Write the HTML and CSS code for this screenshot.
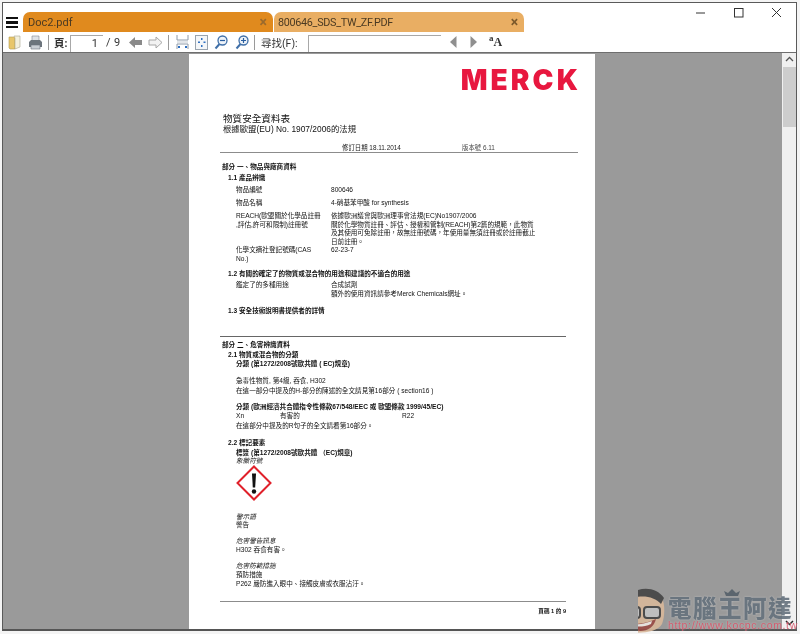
FILE: index.html
```html
<!DOCTYPE html>
<html lang="zh-Hant">
<head>
    <meta charset="UTF-8">
    <meta name="viewport" content="width=device-width, initial-scale=1.0">
    <title>800646_SDS_TW_ZF.PDF</title>
    <link rel="stylesheet" href="styles.css">
</head>
<body>
    <div class="window">
        <div class="tabbar">
            <div class="menu"><span></span><span></span><span></span></div>
            <div class="tab tab-active"><span>Doc2.pdf</span><b class="tab-x">×</b></div>
            <div class="tab tab-other"><span>800646_SDS_TW_ZF.PDF</span><b class="tab-x">×</b></div>
            <div class="controls">
                <svg class="ctl" width="38" height="10" viewBox="0 0 38 10"><path d="M0 5h9" stroke="#333" fill="none"/></svg>
                <svg class="ctl" width="38" height="10" viewBox="0 0 38 10"><rect x=".5" y=".5" width="8.5" height="8.5" stroke="#333" fill="none"/></svg>
                <svg class="ctl" width="24" height="10" viewBox="0 0 24 10"><path d="M0 0l9 9M9 0l-9 9" stroke="#333" fill="none"/></svg>
            </div>
        </div>

        <div class="toolbar">
            <svg class="tb-book" width="13" height="15" viewBox="0 0 13 15"><path d="M1 2h5l1 1v11H2l-1-1z" fill="#e8c66a" stroke="#b49a50" stroke-width=".6"/><path d="M6 1h6v11l-5 2V3z" fill="#f3f0dc" stroke="#a9a58f" stroke-width=".6"/></svg>
            <svg class="tb-print" width="15" height="15" viewBox="0 0 15 15"><path d="M4 1h7v5H4z" fill="#dfe3e8" stroke="#7f8790" stroke-width=".6"/><path d="M1 7l2-2h9l2 2v5H1z" fill="#6c747c"/><path d="M3 10h9v4H3z" fill="#c9ced4" stroke="#6c747c" stroke-width=".6"/></svg>
            <i class="sep tb-sep1"></i>
            <span class="tb-label tb-page">頁:</span>
            <div class="field field-page">1</div>
            <span class="tb-count">/ 9</span>
            <svg class="tb-back" width="15" height="13" viewBox="0 0 15 13"><path d="M1 6.500L7 1v3h7v5H7v3z" fill="#8a8a8a"/></svg>
            <svg class="tb-next" width="15" height="13" viewBox="0 0 15 13"><path d="M14 6.500L8 1v3H1v5h7v3z" fill="#f2f2f2" stroke="#a8a8a8"/></svg>
            <i class="sep tb-sep2"></i>
            <svg class="tb-fitw" width="13" height="16" viewBox="0 0 13 16"><path d="M1 1v5h11V1M1 15v-5h11v5" fill="none" stroke="#8e9aa8"/><path d="M1 8h11" stroke="#c5ccd4"/><path d="M2 12h2v2H2zM9 12h2v2H9z" fill="#2f6fc0"/></svg>
            <svg class="tb-fitp" width="13" height="15" viewBox="0 0 13 15"><rect x=".5" y=".5" width="12" height="14" fill="#f4f6f8" stroke="#9aa4ae"/><path d="M6 3h1.500v2H6zM6 10h1.500v2H6zM3 6.500h2V8H3zM8.500 6.500h2V8h-2z" fill="#2f6fc0"/></svg>
            <svg class="tb-zoomo" width="14" height="15" viewBox="0 0 14 15"><circle cx="8.500" cy="5.500" r="4.500" fill="#eef3f9" stroke="#3f6fa8" stroke-width="1.300"/><path d="M5.500 9L1.500 13.500" stroke="#3f6fa8" stroke-width="2"/><path d="M6 5.500h5" stroke="#2a5fa0" stroke-width="1.200"/></svg>
            <svg class="tb-zoomi" width="14" height="15" viewBox="0 0 14 15"><circle cx="8.500" cy="5.500" r="4.500" fill="#eef3f9" stroke="#3f6fa8" stroke-width="1.300"/><path d="M5.500 9L1.500 13.500" stroke="#3f6fa8" stroke-width="2"/><path d="M6 5.500h5M8.500 3v5" stroke="#2a5fa0" stroke-width="1.200"/></svg>
            <i class="sep tb-sep3"></i>
            <span class="tb-label tb-find">尋找(F):</span>
            <div class="field field-find"></div>
            <svg class="tb-prev" width="7" height="12" viewBox="0 0 7 12"><path d="M6.500 0v12L0 6z" fill="#8f8f8f"/></svg>
            <svg class="tb-fwd" width="7" height="12" viewBox="0 0 7 12"><path d="M.5 0v12L7 6z" fill="#8f8f8f"/></svg>
            <span class="tb-aa"><sup>a</sup>A</span>
        </div>

        <div class="main">
            <div class="viewer">
                <div class="page">
                    <div class="logo">MERCK</div>
                    <div class="doc-title">物質安全資料表</div>
                    <div class="doc-sub">根據歐盟(EU) No. 1907/2006的法規</div>
                    <div class="rev"><span class="rev-date">修訂日期 18.11.2014</span><span>版本號 6.11</span></div>
                    <hr class="rule rule-long rule-top">

                    <div class="ln b sec g-first">部分 一、物品與廠商資料</div>
                    <div class="ln b sub g3">1.1 產品辨識</div>
                    <div class="row g4"><div>物品編號</div><div>800646</div></div>
                    <div class="row g4"><div>物品名稱</div><div>4-硝基苯甲酸 for synthesis</div></div>
                    <div class="row g5">
                        <div>REACH(歐盟關於化學品註冊<br>,評估,許可和限制)註冊號</div>
                        <div>依據歐洲議會與歐洲理事會法規(EC)No1907/2006<br>關於化學物質註冊、評估、授權和管制(REACH)第2篇的規範，此物質<br>及其使用可免除註冊，故無註冊號碼，年使用量無須註冊或於註冊截止<br>日前註冊。</div>
                    </div>
                    <div class="row g0"><div>化學文摘社登記號碼(CAS<br>No.)</div><div>62-23-7</div></div>
                    <div class="ln b sub g7">1.2 有關的確定了的物質或混合物的用途和建議的不適合的用途</div>
                    <div class="row g3"><div>鑑定了的多種用途</div><div>合成試劑<br>額外的使用資訊請參考Merck Chemicals網址。</div></div>
                    <div class="ln b sub g9">1.3 安全技術說明書提供者的詳情</div>

                    <hr class="rule rule-short rule-mid">
                    <div class="ln b sec g-rule">部分 二、危害辨識資料</div>
                    <div class="ln b sub g2">2.1 物質或混合物的分類</div>
                    <div class="ln b item g1">分類 (第1272/2008號歐共體 ( EC)規章)</div>
                    <div class="ln item g9">急毒性物質, 第4級, 吞食, H302</div>
                    <div class="ln item g2">在這一部分中提及的H-部分的陳述的全文請見第16部分 ( section16 )</div>
                    <div class="ln b item g8">分類 (歐洲經濟共合體指令性條款67/548/EEC 或 歐盟條款 1999/45/EC)</div>
                    <div class="ln item risk g1"><span class="risk-a">Xn</span><span class="risk-b">有害的</span><span>R22</span></div>
                    <div class="ln item g2">在這部分中提及的R句子的全文請看第16部分。</div>
                    <div class="ln b sub g9">2.2 標記要素</div>
                    <div class="ln b item g2">標簽 (第1272/2008號歐共體 （EC)規章)</div>
                    <div class="ln i item g0">象徵符號</div>
                    <svg class="ghs" width="36" height="36" viewBox="0 0 36 36">
                        <path d="M18 1.500L34.500 18 18 34.500 1.500 18z" fill="#fff" stroke="#e0202a" stroke-width="2"/>
                        <path d="M16 8.500h4l-.8 14h-2.400z" fill="#111"/>
                        <circle cx="18" cy="26.500" r="2.200" fill="#111"/>
                    </svg>
                    <div class="ln i item g-ghs">警示語</div>
                    <div class="ln item g0">警告</div>
                    <div class="ln i item g8">危害警告訊息</div>
                    <div class="ln item g1">H302 吞食有害。</div>
                    <div class="ln i item g8">危害防範措施</div>
                    <div class="ln item g1">預防措施</div>
                    <div class="ln item g1">P262 嚴防進入眼中、接觸皮膚或衣服沾汙。</div>
                    <hr class="rule rule-short rule-foot">
                    <div class="ln b foot">頁碼 1 的 9</div>
                </div>
            </div>
            <div class="scrollbar">
                <svg width="9" height="6" viewBox="0 0 9 6"><path d="M1 5l3.500-3.500L8 5" fill="none" stroke="#555" stroke-width="1.300"/></svg>
                <div class="thumb"></div>
                <svg class="scroll-down" width="9" height="6" viewBox="0 0 9 6"><path d="M1 1l3.500 3.500L8 1" fill="none" stroke="#222" stroke-width="1.500"/></svg>
            </div>
        </div>
    </div>

    <div class="watermark">
        <svg class="wm-face" width="30" height="48" viewBox="0 0 30 48">
            <path d="M-10 12C0 2 18 2 24 12c3 6 3 18 0 26-5 8-20 10-34 8z" fill="#d9b89a"/>
            <path d="M-10 10C0 0 18 0 26 12l-3 6C16 10 2 8-10 14z" fill="#444"/>
            <rect x="6" y="21" width="16" height="11" rx="3" fill="#c4c4c4" stroke="#444" stroke-width="2"/>
            <rect x="-10" y="21" width="12" height="11" rx="3" fill="#c4c4c4" stroke="#444" stroke-width="2"/>
            <path d="M-8 37c8 2 18 0 26-4-2 8-8 12-16 12-4 0-8-2-10-4z" fill="#9a4a44"/>
            <path d="M-6 38c6 1 12 0 20-3l-1 3c-6 3-13 3-19 2z" fill="#eee8e4"/>
        </svg>
        <div class="wm-text">
            <svg class="wm-crown" width="20" height="12" viewBox="0 0 20 12"><path d="M2 6l4 2 4-4 4 4 4-2-2 5H4z" fill="#55606a"/></svg>
            <div class="wm-name">電腦王阿達</div>
            <div class="wm-url">http://www.kocpc.com.tw</div>
        </div>
    </div>
</body>
</html>
```

FILE: styles.css
```css
html, body {
    margin: 0;
    height: 100%;
    background: #f4f4f4;
    overflow: hidden;
}

body {
    position: relative;
    font-family: Roboto, "Noto Sans CJK TC", sans-serif;
}

.window {
    margin: 2px 3px 0 2px;
    height: 629px;
    border: 1px solid #5a5a5a;
    border-bottom: 2px solid #555;
    box-sizing: border-box;
    background: #fff;
    display: flex;
    flex-direction: column;
    filter: blur(0.3px);
}

/* tabs */
.tabbar {
    height: 29px;
    display: flex;
    align-items: flex-end;
    flex-shrink: 0;
}

.menu {
    width: 12px;
    margin: 0 5px 4px 3px;
    display: flex;
    flex-direction: column;
    gap: 2px;
}

.menu span {
    height: 2.5px;
    background: #111;
}

.tab {
    width: 250px;
    height: 20px;
    margin-right: 1px;
    padding: 0 5px;
    box-sizing: border-box;
    border-radius: 7px 7px 0 0;
    display: flex;
    align-items: center;
    justify-content: space-between;
    font-size: 11px;
    color: #4b3a22;
}

.tab-active {
    background: #e08a1e;
}

.tab-other {
    background: #e9ae63;
    padding-left: 4px;
    font-size: 10.8px;
    letter-spacing: -0.3px;
}

.tab-x {
    font-size: 14px;
    font-weight: 700;
    line-height: 1;
    margin-right: 1px;
    color: #7c5a2c;
}

.tab-active .tab-x {
    color: #9a6a2c;
}

.controls {
    margin-left: auto;
    align-self: flex-start;
    margin-top: 5px;
    display: flex;
}

.ctl {
    display: block;
}

/* toolbar */
.toolbar {
    height: 20px;
    flex-shrink: 0;
    display: flex;
    align-items: center;
    font-size: 10.5px;
    color: #333;
    border-bottom: 1px solid #6e6e6e;
    box-sizing: content-box;
}

.tb-book { margin-left: 5px; }
.tb-print { margin-left: 7px; }
.sep {
    width: 1px;
    height: 15px;
    background: #9a9a9a;
}
.tb-sep1 { margin-left: 5px; }
.tb-page { margin-left: 5px; width: 16px; font-weight: 700; white-space: nowrap; }
.field {
    height: 17px;
    box-sizing: border-box;
    border-top: 1px solid #a8a8a8;
    border-left: 1px solid #a8a8a8;
    background: #fff;
    align-self: flex-end;
}
.field-page {
    width: 33px;
    text-align: right;
    padding-right: 5px;
    font-size: 11px;
    line-height: 16px;
}
.tb-count { margin-left: 3px; width: 15px; font-size: 11px; letter-spacing: 0.4px; white-space: nowrap; }
.tb-back { margin-left: 7px; }
.tb-next { margin-left: 5px; }
.tb-sep2 { margin-left: 5px; }
.tb-fitw { margin-left: 7px; }
.tb-fitp { margin-left: 6px; }
.tb-zoomo { margin-left: 6px; }
.tb-zoomi { margin-left: 7px; }
.tb-sep3 { margin-left: 5px; }
.tb-find { margin-left: 6px; width: 47px; white-space: nowrap; }
.field-find { width: 133px; }
.tb-prev { margin-left: 9px; }
.tb-fwd { margin-left: 13px; }
.tb-aa {
    margin-left: 12px;
    font-family: "Liberation Serif", serif;
    font-weight: 700;
    font-size: 12px;
    line-height: 1;
    color: #333;
}
.tb-aa sup {
    font-size: 9px;
    line-height: 0;
}

/* document area */
.main {
    flex: 1;
    min-height: 0;
    display: flex;
}

.viewer {
    flex: 1;
    background: #9a9a9a;
    padding-left: 186px;
    padding-top: 1px;
    overflow: hidden;
}

.page {
    width: 406px;
    height: 578px;
    box-sizing: border-box;
    background: #fff;
    padding: 16px 17px 0 31px;
    font-family: "Liberation Sans", "Noto Sans CJK TC", sans-serif;
    font-size: 6.6px;
    line-height: 8.5px;
    color: #111;
}

.logo {
    height: 20px;
    margin-right: -3px;
    font-family: Inter, "Liberation Sans", sans-serif;
    font-size: 28px;
    font-weight: 900;
    line-height: 20px;
    letter-spacing: 3.1px;
    text-align: right;
    color: #e8173f;
}

.doc-title {
    margin: 23px 0 0 3px;
    font-size: 9.6px;
    line-height: 11px;
    color: #111;
}

.doc-sub {
    margin: 0 0 0 3px;
    font-size: 8.4px;
    line-height: 11px;
    color: #111;
}

.rev {
    margin-top: 9px;
    padding-left: 122px;
    line-height: 8px;
    font-size: 6.4px;
    color: #444;
}

.rev-date {
    display: inline-block;
    width: 120px;
    color: #222;
}

.rule {
    margin: 0;
    border: 0;
    height: 1px;
    background: #8c8c8c;
}

.rule-top { margin-top: 0; }
.rule-mid { margin-top: 21px; background: #666; }
.rule-foot { margin-top: 13px; }
.rule-long { width: 358px; }
.rule-short { width: 346px; }

.ln {
    line-height: 8px;
    white-space: nowrap;
}

.b { font-weight: 700; color: #111; }
.i { font-style: italic; }
.sec { padding-left: 2px; }
.sub { padding-left: 8px; }
.item { padding-left: 16px; }

.row {
    display: grid;
    grid-template-columns: 95px 1fr;
    padding-left: 16px;
    line-height: 8.5px;
    white-space: nowrap;
}

.g-first { margin-top: 10px; }
.g-rule { margin-top: 4px; }
.g-ghs { margin-top: 12px; }
.g0 { margin-top: 0; }
.g1 { margin-top: 1px; }
.g2 { margin-top: 2px; }
.g3 { margin-top: 3px; }
.g4 { margin-top: 4px; }
.g5 { margin-top: 5px; }
.g7 { margin-top: 7px; }
.g8 { margin-top: 8px; }
.g9 { margin-top: 9px; }

.risk-a { display: inline-block; width: 44px; }
.risk-b { display: inline-block; width: 122px; }

.ghs {
    display: block;
    margin: 0 0 0 16px;
}

.foot {
    width: 346px;
    margin-top: 5px;
    text-align: right;
    font-size: 5.6px;
}

/* scrollbar */
.scrollbar {
    width: 14px;
    background: #f0f0f0;
    display: flex;
    flex-direction: column;
    align-items: center;
    padding-top: 3px;
    box-sizing: border-box;
}

.thumb {
    width: 13px;
    height: 60px;
    margin-top: 5px;
    background: #cdcdcd;
}

.scroll-down {
    margin-top: auto;
    margin-bottom: 3px;
}

/* site watermark over the corner */
.watermark {
    position: absolute;
    left: 638px;
    top: 585px;
    display: flex;
    opacity: 0.9;
}

.wm-face {
    display: block;
    margin-top: 1px;
}

.wm-text {
    position: relative;
    width: 128px;
    padding-top: 11px;
}

.wm-crown {
    position: absolute;
    left: 54px;
    top: 0;
}

.wm-name {
    font-family: "Noto Sans CJK TC", sans-serif;
    font-size: 23.5px;
    font-weight: 900;
    line-height: 22px;
    letter-spacing: 1.5px;
    color: #65717d;
    text-shadow: 0 0 2px rgba(255, 255, 255, 0.45);
    white-space: nowrap;
}

.wm-url {
    font-family: "Liberation Sans", sans-serif;
    font-size: 10.5px;
    line-height: 9px;
    margin-top: 3px;
    letter-spacing: 0.65px;
    color: #d8566a;
    text-shadow: 0 0 2px rgba(255, 255, 255, 0.5);
    white-space: nowrap;
}
```
